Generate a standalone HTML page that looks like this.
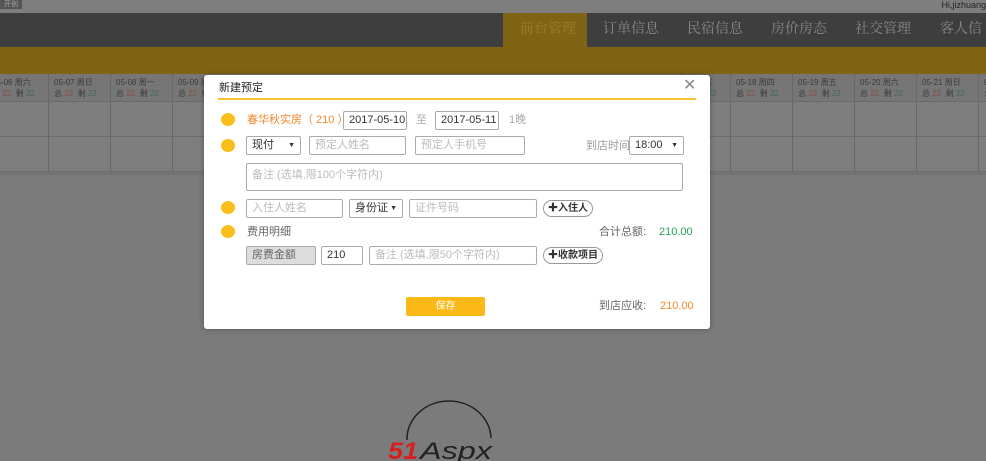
<!DOCTYPE html>
<html><head><meta charset="utf-8"><style>
*{margin:0;padding:0;box-sizing:border-box}
body{width:986px;height:461px;overflow:hidden;background:#7b7b7b;font-family:"Liberation Sans","Noto Sans CJK SC",sans-serif;position:relative;font-size:12px}
.a{position:absolute}
.top{left:0;top:0;width:986px;height:13px;background:#7e7e7e}
.nav{left:0;top:13px;width:986px;height:34px;background:#3e3e3e}
.tab{top:13px;height:34px;line-height:34px;font-size:14px;color:#8a8a8a;font-family:"Liberation Serif","Noto Serif CJK SC",serif}
.band{left:0;top:47px;width:986px;height:27px;background:#7f6414}
.tbl{left:0;top:74px;width:986px;height:98px;background:#7e7e7e;border-bottom:1px solid #6e6e6e}
.hd{left:0;top:74px;width:986px;height:28px;background:#767676;border-bottom:1px solid #6a6a6a}
.vl{top:74px;width:1px;height:98px;background:#686868}
.hl{left:0;width:986px;height:1px;background:#6c6c6c}
.ch{top:77px;font-size:8px;color:#3a3a3a;line-height:11px;white-space:nowrap}
.ch .r{color:#8a4a40}.ch .g{color:#3e6a5a}
.dlg{left:204px;top:75px;width:506px;height:254px;background:#fff;border-radius:3px;box-shadow:0 0 6px rgba(0,0,0,.3)}
.t{font-size:11px;white-space:nowrap;line-height:13px;height:13px}
.dot{width:14px;height:13px;border-radius:50%;background:#fbbd1c}
.in{border:1px solid #aaa;border-radius:2px;height:19px;display:flex;align-items:center;padding-left:5px;font-size:11px;line-height:13px;color:#bbb;white-space:nowrap;background:#fff}
.sel span{position:absolute;right:5px;top:4px;font-size:7px;line-height:9px}
.btn{border:1px solid #999;border-radius:9px;height:17px;display:flex;align-items:center;font-size:10px;line-height:12px;color:#333;padding:0 4px;font-weight:bold;white-space:nowrap}
</style></head><body>
<div class="a top"></div>
<div class="a" style="left:0;top:0;width:22px;height:9px;background:#555;color:#aaa;font-size:7px;line-height:9px;text-align:center">开创</div>
<div class="a t" style="right:0;top:0;font-size:9px;color:#222;line-height:10px">Hi,jizhuang</div>
<div class="a nav"></div>
<div class="a" style="left:503px;top:13px;width:84px;height:34px;background:#7f6414"></div>
<div class="a tab" style="left:520px;color:#9a8030">前台管理</div>
<div class="a tab" style="left:603px">订单信息</div>
<div class="a tab" style="left:687px">民宿信息</div>
<div class="a tab" style="left:771px">房价房态</div>
<div class="a tab" style="left:855px">社交管理</div>
<div class="a tab" style="left:940px">客人信息</div>
<div class="a band"></div>
<div class="a tbl"></div>
<div class="a hd"></div>
<div class="a hl" style="top:136px"></div>
<div class="a" style="left:0;top:172px;width:986px;height:3px;background:#737373"></div>
<div id="cols"></div>
<script>
var d=['05-06 周六','05-07 周日','05-08 周一','05-09 周二','05-10 周三','05-11 周四','05-12 周五','05-13 周六','05-14 周日','05-15 周一','05-16 周二','05-17 周三','05-18 周四','05-19 周五','05-20 周六','05-21 周日','05-22 周一'];
var h='';
for(var k=0;k<17;k++){var x=-14+62*k;h+='<div class="a vl" style="left:'+(x+62)+'px"></div><div class="a ch" style="left:'+(x+6)+'px">'+d[k]+'<br>总 <span class="r">22</span>&nbsp; 剩 <span class="g">22</span></div>';}
document.getElementById('cols').innerHTML=h;
</script>
<div class="a dlg">
<div class="a" style="left:15px;top:7px;font-size:11px;line-height:13px;color:#222">新建预定</div>
<div class="a" style="left:479px;top:3px;font-size:16px;line-height:16px;color:#888">✕</div>
<div class="a" style="left:14px;top:23px;width:478px;height:2px;background:#fbc02d"></div>
<div class="a dot" style="left:17px;top:38px"></div>
<div class="a t" style="left:43px;top:39px;color:#f0872a">春华秋实房（ 210 ）</div>
<div class="a in" style="left:139px;top:36px;width:64px;color:#333">2017-05-10</div>
<div class="a t" style="left:212px;top:39px;color:#aaa">至</div>
<div class="a in" style="left:231px;top:36px;width:64px;color:#333">2017-05-11</div>
<div class="a t" style="left:305px;top:39px;color:#aaa">1晚</div>
<div class="a dot" style="left:17px;top:64px"></div>
<div class="a in sel" style="left:42px;top:61px;width:55px;color:#333">现付 <span>▼</span></div>
<div class="a in" style="left:105px;top:61px;width:97px">预定人姓名</div>
<div class="a in" style="left:211px;top:61px;width:110px">预定人手机号</div>
<div class="a t" style="left:382px;top:65px;color:#999">到店时间</div>
<div class="a in sel" style="left:425px;top:61px;width:55px;color:#333">18:00 <span>▼</span></div>
<div class="a in" style="left:42px;top:88px;width:437px;height:28px;align-items:flex-start;padding-top:5px">备注 (选填,限100个字符内)</div>
<div class="a dot" style="left:17px;top:126px"></div>
<div class="a in" style="left:42px;top:124px;width:97px">入住人姓名</div>
<div class="a in sel" style="left:145px;top:124px;width:54px;color:#333">身份证 <span>▼</span></div>
<div class="a in" style="left:205px;top:124px;width:128px">证件号码</div>
<div class="a btn" style="left:339px;top:125px">✚入住人</div>
<div class="a dot" style="left:17px;top:150px"></div>
<div class="a t" style="left:43px;top:151px;color:#666">费用明细</div>
<div class="a t" style="left:395px;top:151px;color:#666">合计总额:</div>
<div class="a t" style="left:455px;top:151px;color:#27a050">210.00</div>
<div class="a in" style="left:42px;top:171px;width:70px;background:#ddd;color:#666">房费金额</div>
<div class="a in" style="left:117px;top:171px;width:42px;color:#333">210</div>
<div class="a in" style="left:165px;top:171px;width:168px">备注 (选填,限50个字符内)</div>
<div class="a btn" style="left:339px;top:172px">✚收款项目</div>
<div class="a" style="left:202px;top:222px;width:79px;height:19px;background:#fbb917;border-radius:2px;color:#fff;font-size:10px;text-align:center;line-height:19px">保存</div>
<div class="a t" style="left:395px;top:225px;color:#666">到店应收:</div>
<div class="a t" style="left:456px;top:225px;color:#f0872a">210.00</div>
</div>
<svg class="a" style="left:385px;top:400px" width="130" height="61">
<path d="M22 40 A42 38 0 0 1 106 38" fill="none" stroke="#222" stroke-width="1.5"/>
<text x="3" y="59" font-size="24" font-weight="bold" font-style="italic" fill="#d42020" font-family="Liberation Sans" textLength="30" lengthAdjust="spacingAndGlyphs">51</text>
<text x="35" y="59" font-size="24" font-style="italic" fill="#222" font-family="Liberation Sans" textLength="72" lengthAdjust="spacingAndGlyphs">Aspx</text>
</svg>
</body></html>
